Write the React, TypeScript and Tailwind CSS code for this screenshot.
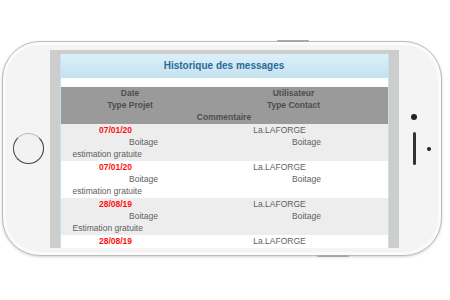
const rows = [
  { date: "07/01/20", user: "La.LAFORGE", projet: "Boitage", contact: "Boitage", comment: "estimation gratuite" },
  { date: "07/01/20", user: "La.LAFORGE", projet: "Boitage", contact: "Boitage", comment: "estimation gratuite" },
  { date: "28/08/19", user: "La.LAFORGE", projet: "Boitage", contact: "Boitage", comment: "Estimation gratuite" },
  { date: "28/08/19", user: "La.LAFORGE", projet: "Boitage", contact: "Boitage", comment: "estimation gratuite" },
];

export default function App() {
  return (
    <div className="w-[450px] h-[300px] bg-white overflow-hidden pt-[41px] pl-[2px]" style={{ fontFamily: '"Liberation Sans", Arial, sans-serif' }}>
      {/* coque du téléphone */}
      <div className="relative w-[440px] h-[215px] rounded-[38px] border-[1.5px] border-[#bcbcbc] bg-[#f4f4f4] shadow-[inset_0_0_0_3px_#fbfbfb,0_1px_3px_rgba(0,0,0,0.18)] flex">
        <div className="absolute -top-[2px] left-[274px] w-[32px] h-[2px] bg-[#a8a8a8] rounded-sm" />
        <div className="absolute -bottom-[2px] left-[314px] w-[32px] h-[2px] bg-[#a8a8a8] rounded-sm" />

        {/* bouton home */}
        <div className="w-[46.5px] flex items-center pl-[10px]">
          <div className="w-[31px] h-[31px] rounded-full border-[1.5px] border-[#444] border-t-[#bbb] border-r-[#333] bg-[#f2f2f2]" />
        </div>

        {/* écran */}
        <div className="mt-[7.5px] w-[349px] h-[198px] bg-[#cdcdcd] px-[10px] pt-[4px] overflow-hidden">
          <div className="bg-white h-full border-x border-[#c3e1ee] text-[8.5px] leading-[12px]">
            <div className="h-[24px] flex items-center justify-center bg-gradient-to-b from-[#dcf0f9] to-[#c4e2ef] text-[10px] font-bold text-[#2b6a98]">
              Historique des messages
            </div>
            <div className="h-[9px] bg-white" />
            <div className="bg-[#9a9a9a] text-[#4e4e4e] font-bold h-[37px]">
              <div className="grid grid-cols-[139px_1fr]">
                <div className="text-center">Date</div>
                <div className="text-center">Utilisateur</div>
                <div className="text-center">Type Projet</div>
                <div className="text-center">Type Contact</div>
              </div>
              <div className="text-center">Commentaire</div>
            </div>
            {rows.map((r, i) => (
              <div key={i} className={`h-[37px] pt-[0.5px] text-[#5e5e5e] ${i % 2 === 0 ? "bg-[#ededed]" : "bg-white"}`}>
                <div className="grid grid-cols-[139px_1fr]">
                  <div className="text-center pr-[29px] font-bold text-[#ff1010]">{r.date}</div>
                  <div className="text-center pr-[28px]">{r.user}</div>
                  <div className="text-center pl-[27px]">{r.projet}</div>
                  <div className="text-center pl-[26px]">{r.contact}</div>
                </div>
                <div className="pl-[12px]">{r.comment}</div>
              </div>
            ))}
          </div>
        </div>

        {/* caméra et haut-parleur */}
        <div className="flex-1 flex items-center">
          <div className="w-[31px] flex flex-col items-center gap-[12px]">
            <div className="w-[6px] h-[6px] rounded-full bg-[#222]" />
            <div className="w-[3px] h-[33px] rounded-sm bg-[#333]" />
            <div className="w-[6px] h-[6px]" />
          </div>
          <div className="w-[4px] h-[4px] rounded-full bg-[#222] -ml-[3px]" />
        </div>
      </div>
    </div>
  );
}
